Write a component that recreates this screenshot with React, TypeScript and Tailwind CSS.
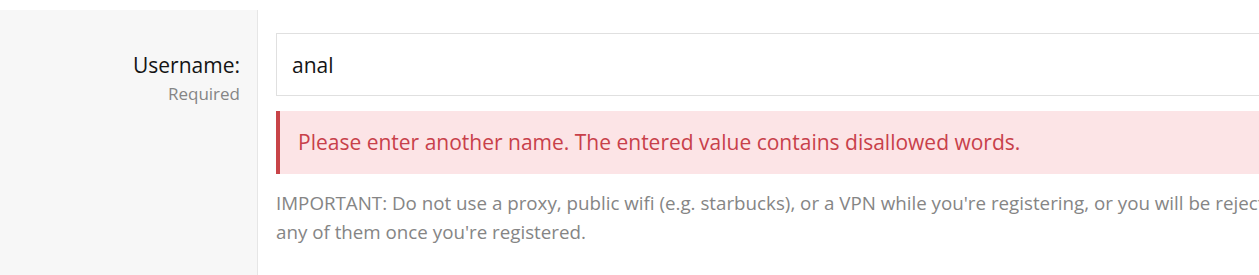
export default function App() {
    return (
        <div
            className="h-[275px] w-[1259px] overflow-hidden bg-white pt-[10px]"
            style={{ fontFamily: '"Open Sans", "Noto Sans", sans-serif' }}
        >
            <div className="flex min-h-[265px]">
                {/* Label column */}
                <div className="w-[258px] shrink-0 border-r border-[#e6e6e6] bg-[#f7f7f7] pr-[17px] pt-[42px] text-right">
                    <div className="text-[21px] leading-[27px] text-[#141414]">
                        Username:
                    </div>
                    <div className="text-[17px] leading-[29px] text-[#858585]">
                        Required
                    </div>
                </div>

                {/* Input column */}
                <div className="w-[1300px] shrink-0 pl-[18px] pt-[23px]">
                    <input
                        type="text"
                        defaultValue="anal"
                        className="h-[63px] w-full border border-[#e0e0e0] bg-white px-[15px] text-[21px] text-[#141414] outline-none"
                    />

                    <div className="mt-[15px] flex h-[63px] items-center border-l-4 border-[#c84448] bg-[#fce4e6] pl-[18px] text-[21px] text-[#c8404a]">
                        Please enter another name. The entered value contains
                        disallowed words.
                    </div>

                    <div className="mt-[14px] text-[18.75px] leading-[29px] text-[#858585]">
                        IMPORTANT: Do not use a proxy, public wifi (e.g.
                        starbucks), or a VPN while you're registering, or you
                        will be rejected. You may use
                        <br />
                        any of them once you're registered.
                    </div>
                </div>
            </div>
        </div>
    )
}
